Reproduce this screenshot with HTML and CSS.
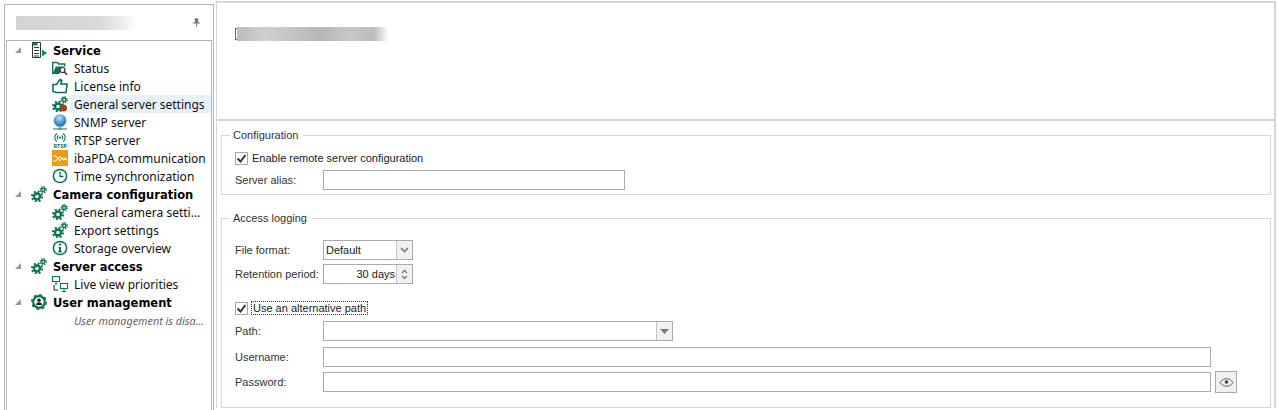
FILE: index.html
```html
<!DOCTYPE html>
<html lang="en">
<head>
    <meta charset="UTF-8">
    <title>Server settings</title>
    <link rel="stylesheet" href="styles.css">
</head>
<body>
<svg class="defs" width="0" height="0">
    <symbol id="i-gears" viewBox="0 0 16 16">
        <g fill="none" stroke="#0b7355">
            <circle cx="6" cy="10.500" r="3" stroke-width="2.400"/>
            <circle cx="6" cy="10.500" r="5" stroke-width="2" stroke-dasharray="2 1.930"/>
            <circle cx="12.200" cy="3.800" r="1.700" stroke-width="1.500"/>
            <circle cx="12.200" cy="3.800" r="3" stroke-width="1.400" stroke-dasharray="1.300 1.050"/>
        </g>
    </symbol>
</svg>

<aside class="sidebar">
    <header class="sidebar-head">
        <div class="blur-title"></div>
        <svg class="pin" width="7" height="9" viewBox="0 0 8 10"><path d="M2 0h4v5h2v1H4.500v4h-1V6H0V5h2z" fill="#777"/></svg>
    </header>
    <div class="tree">
        <div class="row top"><span class="arrow"></span>
            <svg class="icon" viewBox="0 0 16 16"><path d="M1.500 .5h8v15h-8z" fill="#fff" stroke="#2a3a38"/><path d="M3 5h5v1H3zM3 8h5v1H3zM3 11h5v1H3zM3 13.500h5v1H3z" fill="#2a3a38"/><path d="M2 1h4.500v2.500H2z" fill="#0f7d5c"/><path d="M11 7.500l5 3.500-5 3.500z" fill="#0f8a63"/></svg>
            <b>Service</b></div>
        <div class="row sub">
            <svg class="icon" viewBox="0 0 16 16"><path d="M.7 14V2.500h4.500l1.500 1.500h6v2.500" fill="none" stroke="#0b7355" stroke-width="1.400"/><path d="M.7 14l3-7.500H12L8.500 11 7.500 14z" fill="#0b7355"/><circle cx="10.500" cy="10" r="2.500" fill="#fff" stroke="#333" stroke-width="1.200"/><path d="M12.300 11.800L15 14.700" stroke="#333" stroke-width="1.600"/></svg>
            Status</div>
        <div class="row sub">
            <svg class="icon" viewBox="0 0 16 16"><path d="M1 6.500h3.500L8 1.500l1.800 1-1 3.500H15l-1 8.500H4.500L1 13.500z" fill="none" stroke="#0b7355" stroke-width="1.600"/></svg>
            License info</div>
        <div class="row sub selected">
            <svg class="icon" viewBox="0 0 16 16"><use href="#i-gears"/><circle cx="11.500" cy="12" r="3.500" fill="#b23a1c"/></svg>
            General server settings</div>
        <div class="row sub">
            <svg class="icon" viewBox="0 0 16 16"><defs><radialGradient id="globe" cx=".45" cy=".3" r=".75"><stop offset="0" stop-color="#bfe3fb"/><stop offset=".6" stop-color="#3d90d8"/><stop offset="1" stop-color="#1c5fa8"/></radialGradient></defs><circle cx="8" cy="6.500" r="6.300" fill="url(#globe)"/><path d="M1 15h14" stroke="#555" stroke-width="1"/><circle cx="8" cy="14.500" r="1.500" fill="#3fae3f"/></svg>
            SNMP server</div>
        <div class="row sub">
            <svg class="icon" viewBox="0 0 16 16"><g fill="none" stroke="#0b7355" stroke-width="1.100"><path d="M4.800 1.500a5 5 0 0 0 0 8"/><path d="M11.200 1.500a5 5 0 0 1 0 8"/><path d="M6.300 3.500a2.500 2.500 0 0 0 0 4"/><path d="M9.700 3.500a2.500 2.500 0 0 1 0 4"/></g><circle cx="8" cy="5.500" r="1.100" fill="#0b7355"/><text x="8" y="15.500" class="rtsp">RTSP</text></svg>
            RTSP server</div>
        <div class="row sub">
            <svg class="icon" viewBox="0 0 16 16"><path d="M0 0h16v16H0z" fill="#f09a14"/><path d="M1 6h3l4 5 2-3 1.500 2L15 8M1 11h3l4-5 2 3 1.500-1L15 10" fill="none" stroke="#fff"/></svg>
            ibaPDA communication</div>
        <div class="row sub">
            <svg class="icon" viewBox="0 0 16 16"><circle cx="8" cy="8" r="6.600" fill="none" stroke="#0b7355" stroke-width="1.500"/><path d="M8 3.500V8.500h3.500" fill="none" stroke="#0b7355" stroke-width="1.300"/></svg>
            Time synchronization</div>
        <div class="row top"><span class="arrow"></span>
            <svg class="icon" viewBox="0 0 16 16"><use href="#i-gears"/></svg>
            <b>Camera configuration</b></div>
        <div class="row sub">
            <svg class="icon" viewBox="0 0 16 16"><use href="#i-gears"/></svg>
            General camera setti...</div>
        <div class="row sub">
            <svg class="icon" viewBox="0 0 16 16"><use href="#i-gears"/></svg>
            Export settings</div>
        <div class="row sub">
            <svg class="icon" viewBox="0 0 16 16"><circle cx="8" cy="8" r="6.600" fill="none" stroke="#0b7355" stroke-width="1.500"/><path d="M7 3.500h2v2H7zM6.500 7h2.500v4.500h1v1H6v-1h1V8h-.5z" fill="#0b7355"/></svg>
            Storage overview</div>
        <div class="row top"><span class="arrow"></span>
            <svg class="icon" viewBox="0 0 16 16"><use href="#i-gears"/></svg>
            <b>Server access</b></div>
        <div class="row sub">
            <svg class="icon" viewBox="0 0 16 16"><g fill="none" stroke="#0b7355" stroke-width="1.100"><path d="M.5 .5h7v5h-7zM8.500 7.500h7v5h-7z"/></g><path d="M4 6v2M3 8h2M12 13v2M10 15.500h4" stroke="#0b7355"/><path d="M2 9v5h4" fill="none" stroke="#222"/></svg>
            Live view priorities</div>
        <div class="row top"><span class="arrow"></span>
            <svg class="icon" viewBox="0 0 16 16"><circle cx="8" cy="8" r="5.800" fill="none" stroke="#0b7355" stroke-width="2.200"/><circle cx="8" cy="8" r="7.200" fill="none" stroke="#0b7355" stroke-width="1.600" stroke-dasharray="2.800 2.850"/><circle cx="8" cy="6.200" r="1.800" fill="#222"/><path d="M5 11a3 2.800 0 0 1 6 0z" fill="#222"/></svg>
            <b>User management</b></div>
        <div class="row note">User management is disa...</div>
    </div>
</aside>

<main class="content">
    <section class="title-pane">
        <span class="caret"></span>
        <div class="blur-heading"></div>
    </section>

    <section class="settings">
        <div class="group group-config">
            <span class="legend">Configuration</span>
            <label class="check"><span class="box"><svg viewBox="0 0 13 13" width="13" height="13"><path d="M2.500 6.500l3 3 5-6.500" fill="none" stroke="#333" stroke-width="2"/></svg></span><span>Enable remote server configuration</span></label>
            <div class="field"><span class="cap">Server alias:</span><span class="input w-alias"></span></div>
        </div>

        <div class="group group-logging">
            <span class="legend">Access logging</span>
            <div class="field"><span class="cap">File format:</span>
                <span class="input w-short">Default<span class="side-btn"><svg width="9" height="6" viewBox="0 0 9 6"><path d="M1 1l3.500 3.500L8 1" fill="none" stroke="#777" stroke-width="1.600"/></svg></span></span>
            </div>
            <div class="field"><span class="cap">Retention period:</span>
                <span class="input w-short spin-input"><span>30 days</span><span class="side-btn spin"><svg width="7" height="5" viewBox="0 0 7 5"><path d="M1 4l2.500-2.500L6 4" fill="none" stroke="#777" stroke-width="1.300"/></svg><svg width="7" height="5" viewBox="0 0 7 5"><path d="M1 1l2.500 2.500L6 1" fill="none" stroke="#777" stroke-width="1.300"/></svg></span></span>
            </div>
            <label class="check check-alt"><span class="box"><svg viewBox="0 0 13 13" width="13" height="13"><path d="M2.500 6.500l3 3 5-6.500" fill="none" stroke="#333" stroke-width="2"/></svg></span><span class="focused">Use an alternative path</span></label>
            <div class="field"><span class="cap">Path:</span>
                <span class="input w-path"><span class="side-btn"><svg width="9" height="5" viewBox="0 0 9 5"><path d="M0 0h9L4.500 5z" fill="#777"/></svg></span></span>
            </div>
            <div class="field field-user"><span class="cap">Username:</span><span class="input w-long"></span></div>
            <div class="field field-pass"><span class="cap">Password:</span><span class="input w-long"></span>
                <span class="eye-btn"><svg width="15" height="9" viewBox="0 0 16 10"><path d="M.7 5C3 1.800 5.500 .8 8 .8s5 1 7.300 4.200C13 8.200 10.500 9.200 8 9.200S3 8.200 .7 5z" fill="none" stroke="#555"/><circle cx="8" cy="4.500" r="2" fill="#444"/></svg></span>
            </div>
        </div>
    </section>
</main>
</body>
</html>
```

FILE: styles.css
```css
html, body {
    height: 100%;
}

body {
    margin: 0;
    display: flex;
    height: 410px;
    overflow: hidden;
    background: #fff;
    color: #222;
    font-family: "Liberation Sans", sans-serif;
    font-size: 11px;
}

.defs {
    position: absolute;
}

/* left navigation */
.sidebar {
    width: 210px;
    height: 410px;
    flex: none;
    box-sizing: border-box;
    margin: 4px 2px 0 4px;
    border: 1px solid #b4b4b4;
    border-bottom: 0;
}

.sidebar-head {
    height: 35px;
    box-sizing: border-box;
    padding: 0 13px 0 11px;
    display: flex;
    align-items: center;
    justify-content: space-between;
}

.blur-title {
    width: 120px;
    height: 14px;
    background: linear-gradient(90deg, #d4d4d4, #d9d9d9 70%, #efefef 90%, #fff);
}

.tree {
    height: 370px;
    box-sizing: border-box;
    margin: 0 1px 0 1px;
    border: 1px solid #b4b4b4;
    border-bottom: 0;
}

.row {
    height: 18px;
    display: flex;
    align-items: center;
    white-space: nowrap;
    color: #111;
    font-family: "Noto Sans", sans-serif;
    font-size: 12px;
}

.row.top {
    padding-left: 8px;
}

.row.top b {
    font-family: "DejaVu Sans", sans-serif;
    font-size: 11.500px;
    color: #000;
    padding-top: 1px;
}

.row.sub {
    padding-left: 45px;
}

.row.note {
    padding-left: 67px;
    font-style: italic;
    font-size: 10.800px;
    color: #666;
}

.selected {
    background: linear-gradient(90deg, #fff 63px, #e7f1fa 63px);
}

.arrow {
    width: 0;
    height: 0;
    border-style: solid;
    border-width: 0 0 6px 6px;
    border-color: transparent transparent #9a9a9a transparent;
    margin-right: 10px;
    flex: none;
}

.row .icon {
    width: 16px;
    height: 16px;
    flex: none;
    margin-right: 6px;
}

.rtsp {
    font-size: 5.500px;
    font-weight: bold;
    text-anchor: middle;
    fill: #0b7355;
}

/* right side */
.content {
    flex: 1;
    min-width: 0;
    box-sizing: border-box;
    padding: 1px 2px 0 0;
}

.title-pane {
    height: 118px;
    box-sizing: border-box;
    border-top: 2px solid #d6d6d6;
    border-left: 1px solid #d6d6d6;
    border-right: 2px solid #d6d6d6;
    padding: 24px 0 0 18px;
    display: flex;
    align-items: flex-start;
}

.caret {
    width: 2px;
    height: 12px;
    border: 1px solid #7a6248;
    border-right: 0;
    box-sizing: border-box;
    margin-top: 1px;
}

.blur-heading {
    width: 152px;
    height: 14px;
    filter: blur(.6px);
    background: linear-gradient(90deg, #bcbcbc, #cfcfcf 18%, #c2c2c2 40%, #b6b6b6 55%, #c8c8c8 75%, #bcbcbc 90%, #fff);
}

.settings {
    border-top: 2px solid #d6d6d6;
    border-left: 1px solid #d6d6d6;
    border-right: 2px solid #d6d6d6;
    padding: 14px 3px 0 4px;
    height: 289px;
    box-sizing: border-box;
}

.group {
    position: relative;
    border: 1px solid #d6d6d6;
    padding-left: 13px;
}

.legend {
    position: absolute;
    top: -7px;
    left: 8px;
    padding: 0 5px 0 3px;
    background: #fff;
    color: #333;
    line-height: 13px;
}

.group-config {
    height: 60px;
    box-sizing: border-box;
    margin-bottom: 23px;
    padding-top: 13px;
}

.group-logging {
    height: 190px;
    box-sizing: border-box;
    padding-top: 21px;
}

.check {
    display: flex;
    align-items: center;
    height: 16px;
    color: #222;
    margin-top: 1px;
}

.box {
    width: 13px;
    height: 13px;
    box-sizing: border-box;
    border: 1px solid #a8a8a8;
    margin-right: 4px;
    display: block;
    flex: none;
}

.box svg {
    display: block;
    margin: -1px;
}

.check-alt {
    margin-top: 16px;
    margin-bottom: 5px;
}

.focused {
    outline: 1px dotted #333;
    padding: 0 1px;
}

.field {
    display: flex;
    align-items: center;
    height: 20px;
    margin-top: 4px;
}

.group-logging > .field:first-of-type {
    margin-top: 0;
}

.field-user {
    margin-top: 6px;
}

.field-pass {
    margin-top: 5px;
}

.cap {
    width: 88px;
    flex: none;
    white-space: nowrap;
    color: #333;
}

.input {
    height: 20px;
    box-sizing: border-box;
    border: 1px solid #ababab;
    display: flex;
    align-items: center;
    padding-left: 2px;
    background: #fff;
    color: #222;
    position: relative;
}

.w-alias { width: 302px; }
.w-short { width: 90px; }
.w-path  { width: 350px; }
.w-long  { width: 888px; }

.spin-input {
    justify-content: flex-end;
    padding-right: 17px;
}

.side-btn {
    position: absolute;
    top: 0;
    right: 0;
    bottom: 0;
    width: 15px;
    border-left: 1px solid #c4c4c4;
    background: #f1f1f1;
    display: flex;
    align-items: center;
    justify-content: center;
}

.spin {
    flex-direction: column;
    gap: 1px;
}

.eye-btn {
    width: 22px;
    height: 22px;
    box-sizing: border-box;
    margin-left: 4px;
    border: 1px solid #ababab;
    background: #f0f0f0;
    display: flex;
    align-items: center;
    justify-content: center;
}
```
